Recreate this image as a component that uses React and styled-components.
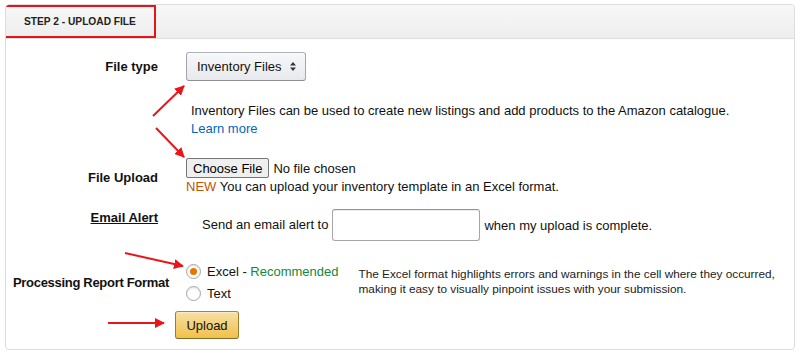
import styled, { createGlobalStyle } from "styled-components";

const GlobalStyle = createGlobalStyle`
  html, body {
    margin: 0;
    padding: 0;
    background: #ffffff;
  }
  body {
    font-family: "Liberation Sans", Arial, sans-serif;
    color: #111;
  }
`;

const Page = styled.div`
  position: relative;
  width: 800px;
  height: 353px;
  padding: 4px 5px 0 5px;
  box-sizing: border-box;
`;

const Panel = styled.div`
  border: 1px solid #dddddd;
  border-radius: 4px;
  overflow: hidden;
  background: #fff;
`;

const Header = styled.div`
  height: 33px;
  display: flex;
  align-items: stretch;
  background: linear-gradient(to bottom, #f7f7f7, #eeeeee);
  border-bottom: 1px solid #dddddd;
`;

const StepTitle = styled.div`
  box-sizing: border-box;
  width: 152px;
  display: flex;
  align-items: center;
  margin: 0 0 0 -2px;
  padding: 0 0 0 18px;
  border: 2px solid #e4141b;
  font-size: 10.2px;
  font-weight: bold;
  color: #222;
  white-space: nowrap;
`;

const Body = styled.div`
  padding: 13px 0 10px 0;
`;

const Row = styled.div`
  display: grid;
  grid-template-columns: 152px 1fr;
  column-gap: 28px;
  align-items: center;
  margin-top: ${(p) => p.$gap || 0}px;
`;

const Label = styled.div`
  text-align: right;
  white-space: nowrap;
  font-size: 13px;
  font-weight: bold;
  color: #111;
  align-self: ${(p) => (p.$top ? "start" : "center")};
  padding-top: ${(p) => (p.$top ? 1 : 0)}px;
  margin-right: ${(p) => -(p.$over || 0)}px;
  letter-spacing: ${(p) => (p.$over ? "-0.3px" : "normal")};
  text-decoration: ${(p) => (p.$underline ? "underline" : "none")};
`;

const Content = styled.div`
  display: flex;
  flex-direction: ${(p) => (p.$column ? "column" : "row")};
  align-items: ${(p) => (p.$column ? "flex-start" : "center")};
  font-size: 13px;
  color: #111;
  margin-left: ${(p) => p.$shift || 0}px;
`;

const SelectButton = styled.div`
  display: flex;
  align-items: center;
  gap: 8px;
  height: 27px;
  padding: 0 9px 0 10px;
  border: 1px solid #adb1b8;
  border-color: #adb1b8 #a2a6ac #8d9096;
  border-radius: 3px;
  background: linear-gradient(to bottom, #f7f8fa, #e7e9ec);
  box-shadow: 0 1px 0 rgba(255, 255, 255, 0.6) inset;
  font-size: 13px;
  color: #111;
`;

const Text = styled.div`
  line-height: 18px;
  padding-left: ${(p) => p.$indent || 0}px;
  color: #111;
`;

const Link = styled.a`
  color: #0066c0;
  text-decoration: none;
`;

const FileButton = styled.button`
  height: 20px;
  padding: 0 6px;
  margin: 0;
  border: 1px solid #767676;
  border-radius: 2px;
  background: #efefef;
  font-family: "Liberation Sans", Arial, sans-serif;
  font-size: 13px;
  color: #000;
`;

const FileLine = styled.div`
  display: flex;
  align-items: center;
  gap: 4px;
  height: 20px;
`;

const New = styled.span`
  color: #c45500;
`;

const EmailInput = styled.input`
  box-sizing: border-box;
  width: 148px;
  height: 32px;
  margin: 0 4px;
  border: 1px solid #a6a6a6;
  border-top-color: #949494;
  border-radius: 3px;
  box-shadow: 0 1px 0 rgba(255, 255, 255, 0.5), 0 1px 0 rgba(0, 0, 0, 0.07) inset;
  outline: none;
`;

const FormatBlock = styled.div`
  display: flex;
  align-items: center;
  gap: 20px;
`;

const Radios = styled.div`
  display: flex;
  flex-direction: column;
`;

const RadioRow = styled.label`
  display: flex;
  align-items: center;
  gap: 6px;
  height: 22px;
  font-size: 13px;
  color: #111;
`;

const RadioDot = styled.span`
  width: 13px;
  height: 13px;
  border-radius: 50%;
  border: 1px solid #a6a6a6;
  background: #fff;
  box-shadow: 0 1px 2px rgba(0, 0, 0, 0.12) inset;
  display: flex;
  align-items: center;
  justify-content: center;

  &::after {
    content: "";
    width: 7px;
    height: 7px;
    border-radius: 50%;
    background: ${(p) => (p.$checked ? "#e77600" : "transparent")};
  }
`;

const Green = styled.span`
  color: #138a36;
`;

const Hint = styled.div`
  font-size: 11.8px;
  line-height: 15px;
  color: #222;
`;

const UploadButton = styled.button`
  width: 64px;
  height: 28px;
  border: 1px solid #a88734;
  border-color: #a88734 #9c7e31 #846a29;
  border-radius: 3px;
  background: linear-gradient(to bottom, #f7dfa5, #f0c14b);
  box-shadow: 0 1px 0 rgba(255, 255, 255, 0.4) inset;
  font-family: "Liberation Sans", Arial, sans-serif;
  font-size: 13px;
  color: #111;
  padding: 0;
`;

const Arrows = styled.svg`
  position: absolute;
  left: 0;
  top: 0;
  pointer-events: none;
`;

const SortIcon = () => (
  <svg width="6" height="9" viewBox="0 0 6 9">
    <path d="M3 0 L6 3.4 L0 3.4 Z" fill="#333" />
    <path d="M3 9 L6 5.6 L0 5.6 Z" fill="#333" />
  </svg>
);

const arrows = [
  [153, 116, 184, 86],
  [156, 128, 184, 157],
  [125, 253, 183, 266],
  [108, 323, 164, 323],
];

const App = () => {
  return (
    <Page>
      <GlobalStyle />
      <Panel>
        <Header>
          <StepTitle>STEP 2 - UPLOAD FILE</StepTitle>
        </Header>
        <Body>
          <Row>
            <Label>File type</Label>
            <Content>
              <SelectButton>
                Inventory Files <SortIcon />
              </SelectButton>
            </Content>
          </Row>

          <Row $gap={21}>
            <div />
            <Content $column>
              <Text $indent={5}>
                Inventory Files can be used to create new listings and add products to the Amazon catalogue.
              </Text>
              <Text $indent={5}>
                <Link href="#">Learn more</Link>
              </Text>
            </Content>
          </Row>

          <Row $gap={20}>
            <Label>File Upload</Label>
            <Content $column>
              <FileLine>
                <FileButton>Choose File</FileButton>
                <span>No file chosen</span>
              </FileLine>
              <Text>
                <New>NEW</New> You can upload your inventory template in an Excel format.
              </Text>
            </Content>
          </Row>

          <Row $gap={13}>
            <Label $top $underline>
              Email Alert
            </Label>
            <Content>
              <Text $indent={16}>Send an email alert to</Text>
              <EmailInput type="text" />
              <span>when my upload is complete.</span>
            </Content>
          </Row>

          <Row $gap={19}>
            <Label $over={11}>Processing Report Format</Label>
            <FormatBlock>
              <Radios>
                <RadioRow>
                  <RadioDot $checked />
                  <span>
                    Excel - <Green>Recommended</Green>
                  </span>
                </RadioRow>
                <RadioRow>
                  <RadioDot />
                  <span>Text</span>
                </RadioRow>
              </Radios>
              <Hint>
                The Excel format highlights errors and warnings in the cell where they occurred,
                <br />
                making it easy to visually pinpoint issues with your submission.
              </Hint>
            </FormatBlock>
          </Row>

          <Row $gap={7}>
            <div />
            <Content $shift={-11}>
              <UploadButton>Upload</UploadButton>
            </Content>
          </Row>
        </Body>
      </Panel>

      <Arrows width="800" height="353" viewBox="0 0 800 353">
        <defs>
          <marker id="head" viewBox="0 0 10 10" refX="9" refY="5" markerWidth="5" markerHeight="5" orient="auto">
            <path d="M0 0 L10 5 L0 10 Z" fill="#e8161b" />
          </marker>
        </defs>
        {arrows.map(([x1, y1, x2, y2], i) => (
          <line
            key={i}
            x1={x1}
            y1={y1}
            x2={x2}
            y2={y2}
            stroke="#e8161b"
            strokeWidth="2"
            markerEnd="url(#head)"
          />
        ))}
      </Arrows>
    </Page>
  );
};

export default App;
